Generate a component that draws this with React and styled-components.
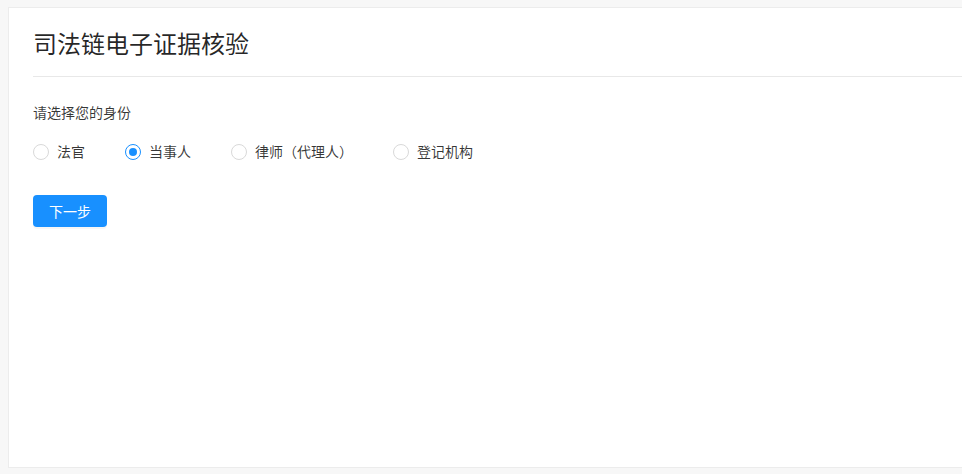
import {useState} from 'react'
import styled, {createGlobalStyle} from 'styled-components'

const roleList = [
  {id: 'JUDGE', text: '法官'},
  {id: 'PARTY', text: '当事人'},
  {id: 'LAWYER', text: '律师（代理人）'},
  {id: 'REGISTRY', text: '登记机构'},
]

const GlobalStyle = createGlobalStyle`
  html, body {
    margin:0;
    padding:0;
    background-color:#f7f7f7;
    overflow:hidden;
  }
  body {
    font-family:"Liberation Sans", "Noto Sans CJK SC", sans-serif;
  }
`

const App = () => {
  const [role, setRole] = useState('PARTY')

  return (
    <Page>
      <GlobalStyle />
      <Card>
        <Header>
          <Title>司法链电子证据核验</Title>
        </Header>
        <Body>
          <Label>请选择您的身份</Label>
          <RadioGroup>
            {roleList.map(each => (
              <RadioItem key={each.id} onClick={() => setRole(each.id)}>
                <RadioCircle checked={each.id === role} />
                <RadioText>{each.text}</RadioText>
              </RadioItem>
            ))}
          </RadioGroup>
          <Button type="button">下一步</Button>
        </Body>
      </Card>
    </Page>
  )
}

export default App

const Page = styled.div`
  height:474px;
  padding:7px 0 0 8px;
  box-sizing:border-box;
`

const Card = styled.div`
  width:980px;
  height:461px;
  box-sizing:border-box;
  background-color:#ffffff;
  border:1px solid #ececec;
  padding:0 24px;
`

const Header = styled.div`
  padding:21px 0 15px;
  border-bottom:1px solid #e8e8e8;
`

const Title = styled.h1`
  margin:0;
  font-size:24px;
  line-height:32px;
  font-weight:normal;
  color:rgba(0, 0, 0, 0.85);
`

const Body = styled.div`
  padding-top:25px;
  display:flex;
  flex-direction:column;
  align-items:flex-start;
`

const Label = styled.p`
  margin:0;
  font-size:14px;
  line-height:22px;
  color:rgba(0, 0, 0, 0.78);
`

const RadioGroup = styled.div`
  display:flex;
  align-items:center;
  margin-top:17px;
`

const RadioItem = styled.label`
  display:flex;
  align-items:center;
  margin-right:40px;
  cursor:pointer;
`

const RadioCircle = styled.span`
  position:relative;
  width:16px;
  height:16px;
  box-sizing:border-box;
  border-radius:50%;
  border:1px solid ${props => (props.checked ? '#1890ff' : '#d9d9d9')};
  background-color:#ffffff;

  &::after {
    content:'';
    position:absolute;
    top:3px;
    left:3px;
    width:8px;
    height:8px;
    border-radius:50%;
    background-color:#1890ff;
    display:${props => (props.checked ? 'block' : 'none')};
  }
`

const RadioText = styled.span`
  padding-left:8px;
  font-size:14px;
  line-height:22px;
  color:rgba(0, 0, 0, 0.78);
`

const Button = styled.button`
  margin-top:32px;
  height:32px;
  padding:0 16px;
  border:none;
  border-radius:4px;
  background-color:#1890ff;
  color:#ffffff;
  font-family:inherit;
  font-size:14px;
  cursor:pointer;
  box-shadow:0 2px 0 rgba(0, 0, 0, 0.035);
`
